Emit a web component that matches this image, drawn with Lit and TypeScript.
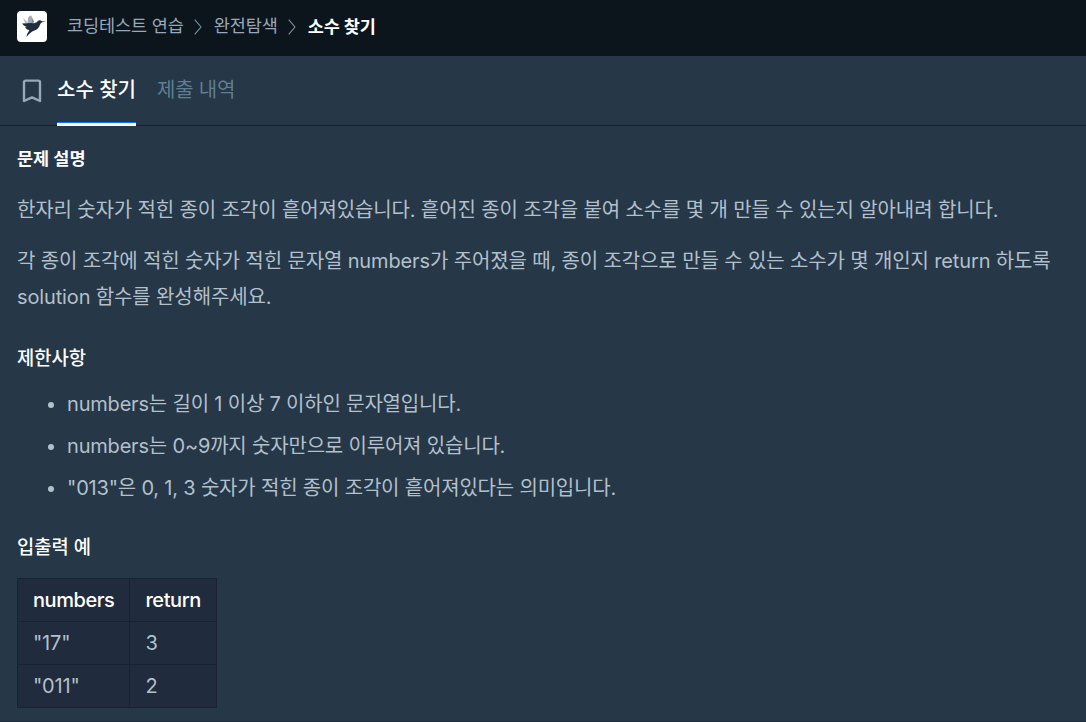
import { LitElement, html, css } from 'lit';
import { customElement, property } from 'lit/decorators.js';

@customElement('lesson-header')
export class LessonHeader extends LitElement {
  @property({ type: Array }) crumbs: string[] = [];

  static styles = css`
    :host {
      display: block;
    }

    .nav {
      display: flex;
      align-items: center;
      box-sizing: border-box;
      height: 56px;
      padding: 0 17px 3px;
      background-color: #0c151c;
      color: #98a8b9;
      font-size: 17.5px;
      line-height: 26px;
      letter-spacing: -0.1px;
    }

    .logo {
      display: block;
      width: 30px;
      height: 31px;
      margin-right: 20px;
    }

    .crumb {
      padding-bottom: 2px;
      white-space: nowrap;
    }

    .crumb--current {
      padding-bottom: 0;
      color: #ffffff;
      font-weight: 700;
    }

    .arrow {
      display: block;
      width: 8px;
      height: 16px;
      margin: 0 12px 0 10px;
      fill: none;
      stroke: #78909f;
      stroke-width: 1.1;
    }
  `;

  render() {
    const last = this.crumbs.length - 1;

    return html`
      <nav class="nav">
        <svg class="logo" viewBox="0 0 30 31">
          <rect width="30" height="31" rx="4" fill="#ffffff" />
          <path d="M8 12 6.2 7.2 11 11.5Z" fill="#b6bbc3" />
          <path d="M10.5 12.5 11.2 6.2 14 4.2 16.6 9.2 14.5 13Z" fill="#a3a9b2" />
          <path d="M14.6 12.6 15.3 7.8 17.3 11.2Z" fill="#7d8490" />
          <path
            d="M5 12.6Q11 11.8 17 12.2L19.8 11.2Q20.6 9.3 22.8 9.3 24.1 9.4 24.9 10.3L29.2 10.7 25 11.2Q23.2 12.1 22.8 14.2 21.6 18.2 17.4 19.4 13 21 9.6 26 9.8 22.4 12.4 19.2 9.3 18.7 8 16.3L9.7 16.1Q6.4 14.8 5 12.6Z"
            fill="#222c40"
          />
        </svg>
        ${this.crumbs.map((crumb, i) =>
          i === last
            ? html`<span class="crumb crumb--current">${crumb}</span>`
            : html`
                <span class="crumb">${crumb}</span>
                <svg class="arrow" viewBox="0 0 8 16"><path d="M0.7 0.7 7 8 0.7 15.3" /></svg>
              `
        )}
      </nav>
    `;
  }
}

@customElement('lesson-tabs')
export class LessonTabs extends LitElement {
  @property({ type: Array }) tabs: string[] = [];
  @property({ type: Number }) selected = 0;

  static styles = css`
    :host {
      display: block;
    }

    .tabs {
      display: flex;
      box-sizing: border-box;
      height: 70px;
      padding-left: 22px;
      border-bottom: 1px solid #172334;
    }

    .bookmark {
      display: block;
      width: 20px;
      height: 24px;
      margin: 23px 15px 0 0;
      fill: none;
      stroke: #98a8b9;
      stroke-width: 2.4;
      stroke-linejoin: round;
    }

    .tab {
      box-sizing: border-box;
      height: 70px;
      margin-right: 21px;
      padding-top: 19px;
      color: #5f7f90;
      font-size: 20px;
      line-height: 30px;
      letter-spacing: -0.18px;
      white-space: nowrap;
    }

    .tab--selected {
      border-bottom: 3px solid #ffffff;
      color: #ffffff;
      font-weight: 500;
      letter-spacing: 0;
      box-shadow: inset 0 -1px #0078ff;
    }
  `;

  render() {
    return html`
      <div class="tabs">
        <svg class="bookmark" viewBox="0 0 20 24">
          <path d="M3.6 1.6H16.4Q18 1.6 18 3.2V22L10 18.4 2 22V3.2Q2 1.6 3.6 1.6Z" />
        </svg>
        ${this.tabs.map(
          (tab, i) => html`<div class="tab ${i === this.selected ? 'tab--selected' : ''}">${tab}</div>`
        )}
      </div>
    `;
  }
}

@customElement('example-table')
export class ExampleTable extends LitElement {
  @property({ type: Array }) head: string[] = [];
  @property({ type: Array }) rows: string[][] = [];

  static styles = css`
    :host {
      display: block;
    }

    .table {
      border-collapse: collapse;
      background-color: #202b3d;
      font-size: 20px;
      line-height: 30px;
      letter-spacing: -0.2px;
    }

    .cell {
      box-sizing: border-box;
      height: 43px;
      padding: 6px 15px;
      border: 1px solid #172334;
      text-align: left;
      font-weight: 400;
    }

    .cell--head {
      color: #ffffff;
      font-weight: 500;
      letter-spacing: -0.43px;
    }
  `;

  render() {
    return html`
      <table class="table">
        <thead>
          <tr>
            ${this.head.map((text) => html`<th class="cell cell--head">${text}</th>`)}
          </tr>
        </thead>
        <tbody>
          ${this.rows.map(
            (row) => html`<tr>${row.map((text) => html`<td class="cell">${text}</td>`)}</tr>`
          )}
        </tbody>
      </table>
    `;
  }
}

@customElement('app-root')
export class AppRoot extends LitElement {
  static styles = css`
    :host {
      display: block;
      box-sizing: border-box;
      height: 722px;
      overflow: hidden;
      border-bottom: 1px solid #202b3d;
      background-color: #263747;
      color: #b2c0cc;
      font-family: Inter, 'Noto Sans CJK KR', sans-serif;
    }

    .guide {
      padding: 18px 17px 0;
      font-size: 20px;
      line-height: 36px;
      letter-spacing: -0.135px;
      word-break: keep-all;
    }

    .label {
      margin: 0;
      color: #ffffff;
      font-size: 17.5px;
      font-weight: 700;
      line-height: 30px;
      letter-spacing: 0;
    }

    .text {
      margin: 18px 0 0;
    }

    .text + .text {
      margin-top: 15px;
    }

    .title {
      margin: 29px 0 0;
      color: #ffffff;
      font-size: 18.75px;
      font-weight: 500;
      line-height: 30px;
      letter-spacing: 0;
    }

    .list {
      margin: 12px 0 0;
      padding-left: 50px;
      letter-spacing: -0.19px;
    }

    .item {
      margin-bottom: 6px;
    }

    .list + .title {
      margin-top: 27px;
    }

    .examples {
      margin-top: 15px;
    }
  `;

  render() {
    return html`
      <lesson-header .crumbs=${['코딩테스트 연습', '완전탐색', '소수 찾기']}></lesson-header>
      <lesson-tabs .tabs=${['소수 찾기', '제출 내역']}></lesson-tabs>
      <main class="guide">
        <h6 class="label">문제 설명</h6>
        <p class="text">
          한자리 숫자가 적힌 종이 조각이 흩어져있습니다. 흩어진 종이 조각을 붙여 소수를 몇 개 만들 수 있는지 알아내려 합니다.
        </p>
        <p class="text">
          각 종이 조각에 적힌 숫자가 적힌 문자열 numbers가 주어졌을 때, 종이 조각으로 만들 수 있는 소수가 몇 개인지 return 하도록 solution 함수를 완성해주세요.
        </p>
        <h5 class="title">제한사항</h5>
        <ul class="list">
          <li class="item">numbers는 길이 1 이상 7 이하인 문자열입니다.</li>
          <li class="item">numbers는 0~9까지 숫자만으로 이루어져 있습니다.</li>
          <li class="item">"013"은 0, 1, 3 숫자가 적힌 종이 조각이 흩어져있다는 의미입니다.</li>
        </ul>
        <h5 class="title">입출력 예</h5>
        <example-table
          class="examples"
          .head=${['numbers', 'return']}
          .rows=${[['"17"', '3'], ['"011"', '2']]}
        ></example-table>
      </main>
    `;
  }
}

declare global {
  interface HTMLElementTagNameMap {
    'lesson-header': LessonHeader;
    'lesson-tabs': LessonTabs;
    'example-table': ExampleTable;
    'app-root': AppRoot;
  }
}
